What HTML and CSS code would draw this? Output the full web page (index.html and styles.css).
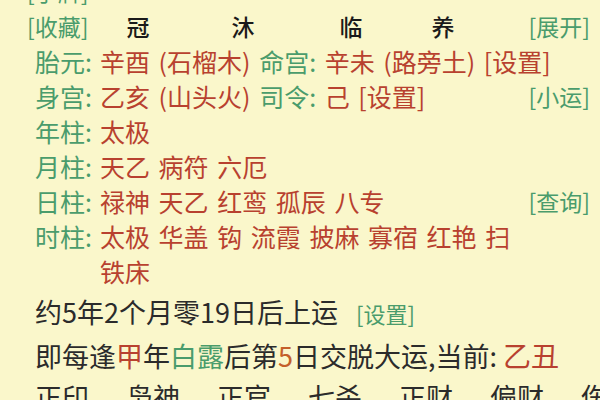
FILE: index.html
```html
<!DOCTYPE html>
<html>
<head>
    <meta charset="UTF-8">
    <title>八字排盘</title>
    <link rel="stylesheet" href="styles.css">
</head>
<body>
    <div class="page">
        <!-- top rows: links and the chang-sheng stages -->
        <div class="head cut">
            <span class="link">[手牌]</span>
        </div>
        <div class="head">
            <span class="link">[收藏]</span>
            <span class="stage">冠</span>
            <span class="stage">沐</span>
            <span class="stage">临</span>
            <span class="stage">养</span>
            <span class="link end">[展开]</span>
        </div>

        <!-- labelled rows -->
        <div class="row">
            <span class="lbl">胎元:</span>
            <span class="vals"><span class="red">辛酉 (石榴木)</span> <span class="green">命宫:</span> <span class="red">辛未 (路旁土) [设置]</span></span>
        </div>
        <div class="row">
            <span class="lbl">身宫:</span>
            <span class="vals"><span class="red">乙亥 (山头火)</span> <span class="green">司令:</span> <span class="red">己 [设置]</span></span>
            <span class="link end">[小运]</span>
        </div>
        <div class="row">
            <span class="lbl">年柱:</span>
            <span class="vals red">太极</span>
        </div>
        <div class="row">
            <span class="lbl">月柱:</span>
            <span class="vals red">天乙 病符 六厄</span>
        </div>
        <div class="row">
            <span class="lbl">日柱:</span>
            <span class="vals red">禄神 天乙 红鸾 孤辰 八专</span>
            <span class="link end">[查询]</span>
        </div>
        <div class="row">
            <span class="lbl">时柱:</span>
            <span class="vals red narrow">太极 华盖 钩 流霞 披麻 寡宿 红艳 扫 铁床</span>
        </div>

        <!-- da yun text -->
        <div class="line first">约5年2个月零19日后上运 <span class="link small">[设置]</span></div>
        <div class="line">即每逢<span class="red">甲</span>年<span class="green">白露</span>后第<span class="orange">5</span>日交脱大运,当前: <span class="red big">乙丑</span></div>
        <div class="gods">
            <span>正印</span>
            <span>枭神</span>
            <span>正官</span>
            <span>七杀</span>
            <span>正财</span>
            <span>偏财</span>
            <span>伤官</span>
        </div>
    </div>
</body>
</html>
```

FILE: styles.css
```css
body {
    margin: 0;
    background-color: #faf7cb;
    font-family: "Noto Sans CJK SC", "Noto Sans", sans-serif;
    color: #2b2b2b;
    overflow: hidden;
}
.page {
    width: 600px;
    height: 400px;
    padding: 0 10px 0 27px;
    box-sizing: border-box;
    overflow: hidden;
}
.head {
    display: grid;
    grid-template-columns: 58px 106px 104px 112px 72px 1fr;
    align-items: center;
    height: 35px;
    font-size: 23px;
    line-height: 35px;
}
.head.cut {
    margin-top: -26px;
}
.stage {
    text-align: center;
    color: #1a1a1a;
    font-weight: 500;
}
.link {
    color: #4a9c6c;
    font-size: 23px;
    white-space: nowrap;
}
.end {
    margin-left: auto;
    justify-self: end;
}
.row {
    display: flex;
    align-items: flex-start;
    padding-left: 8px;
    font-size: 25px;
    line-height: 35px;
    word-spacing: 3px;
}
.lbl {
    width: 65px;
    flex: none;
    color: #4a9c6c;
}
.vals {
    flex: 1;
}
.narrow {
    flex: none;
    width: 422px;
}
.red {
    color: #b8412f;
}
.green {
    color: #4a9c6c;
}
.orange {
    color: #c4602a;
}
.line {
    padding-left: 8px;
    font-size: 27px;
    line-height: 42px;
    white-space: nowrap;
}
.line.first {
    margin-top: 2px;
}
.small {
    font-size: 22px;
    margin-left: 12px;
}
.big {
    font-size: 28px;
}
.gods {
    display: flex;
    gap: 37px;
    padding-left: 8px;
    font-size: 27px;
    line-height: 40px;
    white-space: nowrap;
}
```
